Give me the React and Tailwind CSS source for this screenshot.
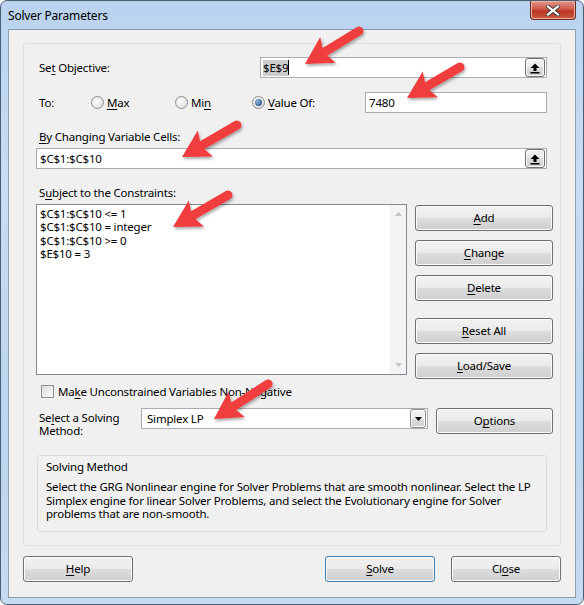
import React from "react";

const U = ({ children }) => <span className="underline underline-offset-[2px] decoration-[1px]">{children}</span>;

const btn =
  "flex items-center justify-center rounded-[3px] border bg-[linear-gradient(#f2f2f2,#ebebeb_50%,#dddddd_50%,#cfcfcf)] shadow-[inset_0_0_0_1px_#fbfbfb] text-black";

const Button = ({ className = "", primary, children }) => (
  <div className={`${btn} ${primary ? "border-[#3c7fb1] shadow-[inset_0_0_0_1px_#9fdcf8]" : "border-[#707070]"} ${className}`}>
    {children}
  </div>
);

const Radio = ({ checked }) => (
  <span className="flex h-[13px] w-[13px] shrink-0 items-center justify-center rounded-full border border-[#8e8f8f] bg-[radial-gradient(circle_at_40%_40%,#ffffff,#d4d4d4)]">
    {checked && <span className="h-[7px] w-[7px] rounded-full bg-[radial-gradient(circle_at_35%_35%,#8fb6e4,#1b3c68)]" />}
  </span>
);

const RefButton = () => (
  <div className={`${btn} border-[#707070] h-[19px] w-[20px]`}>
    <svg width="12" height="12" viewBox="0 0 12 12">
      <polygon points="1.5,6 6,1.5 10.5,6" fill="#000" />
      <rect x="4.5" y="5.5" width="3" height="3.5" fill="#000" />
      <rect x="1.5" y="10" width="9" height="1.5" fill="#000" />
    </svg>
  </div>
);

function Arrow({ x1, y1, x2, y2 }) {
  const dx = x2 - x1;
  const dy = y2 - y1;
  const len = Math.hypot(dx, dy);
  const ux = dx / len;
  const uy = dy / len;
  const px = -uy;
  const py = ux;
  const hl = 27;
  const hw = 15;
  const bx = x2 - ux * hl;
  const by = y2 - uy * hl;
  const nx = bx + ux * 5;
  const ny = by + uy * 5;
  return (
    <g filter="url(#sh)">
      <line x1={x1} y1={y1} x2={nx} y2={ny} stroke="#f03d3d" strokeWidth="9" strokeLinecap="round" />
      <polygon
        points={`${x2},${y2} ${bx + px * hw},${by + py * hw} ${nx},${ny} ${bx - px * hw},${by - py * hw}`}
        fill="#f03d3d"
      />
    </g>
  );
}

export default function App() {
  return (
    <div className="relative h-[605px] w-[584px] overflow-hidden bg-white font-['Noto_Sans',sans-serif] text-[11.5px] tracking-[-0.2px] text-black">
      <div className="flex h-[605px] w-[584px] flex-col rounded-[7px] border border-[#4b5d70] bg-[linear-gradient(180deg,#b9d3f0,#c9ddf3_30%,#bcd4ee_70%,#c7dbf2)]">
        {/* title bar */}
        <div className="flex h-[28px] shrink-0 items-start justify-between pl-[7px] pr-[7px]">
          <span className="mt-[7px] text-[12px] leading-[16px]">Solver Parameters</span>
          <div className="flex h-[19px] w-[46px] items-center justify-center rounded-b-[4px] border border-t-0 border-[#6b2a22] bg-[linear-gradient(#e2988d,#cf5a4b_45%,#b93423_55%,#cc5a3f)] shadow-[inset_0_0_0_1px_#eab3a8]">
            <svg width="14" height="11" viewBox="0 0 14 11">
              <path d="M2 1.5 L12 9.5 M12 1.5 L2 9.5" stroke="#3b3b3b" strokeWidth="4" strokeLinecap="square" />
              <path d="M2 1.5 L12 9.5 M12 1.5 L2 9.5" stroke="#fff" strokeWidth="2.2" strokeLinecap="square" />
            </svg>
          </div>
        </div>

        {/* client area */}
        <div className="mx-[7px] flex h-[569px] flex-col border border-[#8d9eb0] bg-[#f0f0f0]">
          {/* inner panel */}
          <div className="ml-[14px] mt-[13px] flex h-[503px] w-[538px] flex-col rounded-[3px] border border-[#dcdfe3] bg-[#f0f0f0]">
            {/* objective */}
            <div className="mt-[13px] flex h-[21px] items-center pl-[15px]">
              <span className="w-[221px]">Se<U>t</U> Objective:</span>
              <div className="flex h-[21px] w-[287px] items-center justify-between border border-[#abadb3] bg-white pl-[2px] pr-px">
                <span className="flex items-center">
                  <span className="bg-[#cccccc] leading-[16px]">$E$9</span>
                  <span className="h-[15px] w-px bg-black" />
                </span>
                <RefButton />
              </div>
            </div>

            {/* to */}
            <div className="mt-[14px] flex h-[21px] items-center pl-[15px]">
              <span className="w-[52px]">To:</span>
              <div className="flex w-[84px] items-center">
                <Radio />
                <span className="ml-[3px]"><U>M</U>ax</span>
              </div>
              <div className="flex w-[77px] items-center">
                <Radio />
                <span className="ml-[3px]">Mi<U>n</U></span>
              </div>
              <div className="flex w-[113px] items-center">
                <Radio checked />
                <span className="ml-[3px]"><U>V</U>alue Of:</span>
              </div>
              <div className="flex h-[21px] w-[182px] items-center border border-[#abadb3] bg-white pl-[3px]">7480</div>
            </div>

            {/* variable cells */}
            <div className="mt-[16px] pl-[15px] leading-[16px]"><U>B</U>y Changing Variable Cells:</div>
            <div className="ml-[12px] mt-[3px] flex h-[21px] w-[511px] items-center justify-between border border-[#abadb3] bg-white pl-[3px] pr-px">
              <span>$C$1:$C$10</span>
              <RefButton />
            </div>

            {/* constraints */}
            <div className="mt-[16px] pl-[15px] leading-[16px]">S<U>u</U>bject to the Constraints:</div>
            <div className="ml-[12px] mt-[3px] flex h-[175px] items-start">
              <div className="flex h-[171px] w-[371px] border border-[#828790] bg-white">
                <div className="flex-1 pl-[3px] pt-[2px] leading-[13.4px]">
                  <div>$C$1:$C$10 &lt;= 1</div>
                  <div>$C$1:$C$10 = integer</div>
                  <div>$C$1:$C$10 &gt;= 0</div>
                  <div>$E$10 = 3</div>
                </div>
                <div className="flex w-[16px] flex-col items-center justify-between border-l border-[#f0f0f0] bg-[#f4f4f4] py-[7px]">
                  <svg width="7" height="4" viewBox="0 0 7 4"><polygon points="0,4 3.5,0 7,4" fill="#c2c2c2" /></svg>
                  <svg width="7" height="4" viewBox="0 0 7 4"><polygon points="0,0 3.5,4 7,0" fill="#c2c2c2" /></svg>
                </div>
              </div>
              <div className="ml-[8px] flex w-[138px] flex-col">
                <Button className="mt-[1px] h-[26px]"><U>A</U>dd</Button>
                <Button className="mt-[9px] h-[26px]"><U>C</U>hange</Button>
                <Button className="mt-[9px] h-[26px]"><U>D</U>elete</Button>
                <Button className="mt-[17px] h-[26px]"><U>R</U>eset All</Button>
                <Button className="mt-[9px] h-[26px]"><U>L</U>oad/Save</Button>
              </div>
            </div>

            {/* checkbox */}
            <div className="mt-[6px] flex h-[13px] items-center pl-[17px]">
              <span className="h-[13px] w-[13px] border border-[#8e8f8f] bg-[linear-gradient(135deg,#dcdcdc,#fbfbfb)]" />
              <span className="ml-[4px]">Ma<U>k</U>e Unconstrained Variables Non-Negative</span>
            </div>

            {/* method */}
            <div className="mt-[10px] flex h-[26px] items-start pl-[15px]">
              <div className="mt-[3px] w-[102px] leading-[13px]">
                Se<U>l</U>ect a Solving<br />Method:
              </div>
              <div className="flex h-[21px] w-[287px] items-center justify-between border border-[#abadb3] bg-white pl-[5px] pr-px">
                <span>Simplex LP</span>
                <div className={`${btn} border-[#8a8a8a] h-[19px] w-[16px]`}>
                  <svg width="7" height="4" viewBox="0 0 7 4"><polygon points="0,0 3.5,4 7,0" fill="#000" /></svg>
                </div>
              </div>
              <Button className="ml-[8px] h-[26px] w-[117px]">O<U>p</U>tions</Button>
            </div>

            {/* solving method group */}
            <div className="ml-[13px] mt-[21px] h-[77px] w-[510px] rounded-[3px] border border-[#d9dcdf] pl-[8px]">
              <div className="mt-[3px] leading-[16px]">Solving Method</div>
              <div className="mt-[5px] whitespace-nowrap leading-[13.5px]">
                Select the GRG Nonlinear engine for Solver Problems that are smooth nonlinear. Select the LP
                <br />
                Simplex engine for linear Solver Problems, and select the Evolutionary engine for Solver
                <br />
                problems that are non-smooth.
              </div>
            </div>
          </div>

          {/* bottom buttons */}
          <div className="mt-[10px] flex pl-[14px] pr-[14px]">
            <Button className="h-[26px] w-[110px]"><U>H</U>elp</Button>
            <Button primary className="ml-auto h-[26px] w-[110px]"><U>S</U>olve</Button>
            <Button className="ml-[16px] h-[26px] w-[110px]">Cl<U>o</U>se</Button>
          </div>
        </div>
      </div>

      {/* annotation arrows */}
      <svg className="pointer-events-none absolute left-0 top-0" width="584" height="605">
        <defs>
          <filter id="sh" x="-20%" y="-20%" width="140%" height="140%">
            <feDropShadow dx="1" dy="2" stdDeviation="1.5" floodColor="#000" floodOpacity="0.35" />
          </filter>
        </defs>
        <Arrow x1={359} y1={31} x2={305} y2={64} />
        <Arrow x1={460} y1={67} x2={407} y2={98} />
        <Arrow x1={237} y1={125} x2={182} y2={157} />
        <Arrow x1={228} y1={195} x2={173} y2={227} />
        <Arrow x1={268} y1={384} x2={214} y2={419} />
      </svg>
    </div>
  );
}
